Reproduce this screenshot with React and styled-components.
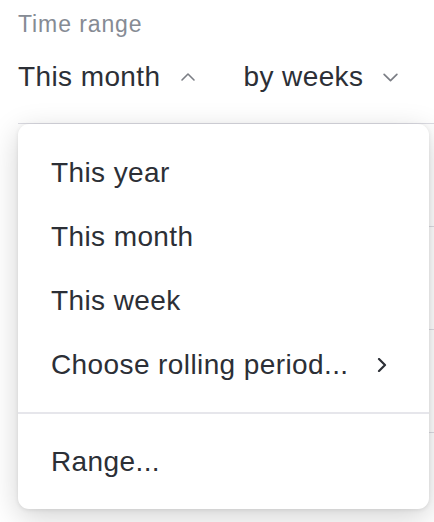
import React from 'react';
import styled, { createGlobalStyle } from 'styled-components';

const GlobalStyle = createGlobalStyle`
  html, body {
    margin: 0;
    padding: 0;
    background: #ffffff;
  }
  body {
    font-family: "Liberation Sans", Arial, sans-serif;
    color: #2c2f36;
    overflow: hidden;
  }
`;

const Page = styled.div`
  position: relative;
  height: 522px;
  padding: 11px 0 0 18px;
  box-sizing: border-box;
`;

const Label = styled.div`
  font-size: 23px;
  line-height: 26px;
  letter-spacing: 0.9px;
  color: #868b94;
`;

const Controls = styled.div`
  display: flex;
  align-items: center;
  gap: 48px;
  margin-top: 20px;
`;

const Picker = styled.div`
  display: flex;
  align-items: center;
  gap: 19px;
  font-size: 28px;
  line-height: 40px;
  letter-spacing: 0.4px;
  color: #2c2f36;
`;

const Table = styled.div`
  margin-top: 26px;
`;

const TableRow = styled.div`
  height: 102px;
  border-top: 1px solid #dcdce3;
`;

const Menu = styled.div`
  position: absolute;
  top: 124px;
  left: 18px;
  width: 411px;
  box-sizing: border-box;
  padding: 17px 0 15px;
  background: #ffffff;
  border-radius: 11px;
  box-shadow: 0 1px 4px rgba(0, 0, 0, 0.09), 0 8px 30px rgba(0, 0, 0, 0.18);
`;

const Item = styled.div`
  display: flex;
  align-items: center;
  justify-content: space-between;
  height: 64px;
  padding: 0 42px 0 33px;
  font-size: 28px;
  line-height: 64px;
  letter-spacing: 0.4px;
  color: #2c2f36;
`;

const Divider = styled.div`
  height: 2px;
  margin: 15px 0 16px;
  background: #e6e6eb;
`;

const Chevron = ({ dir, size = 14, color = '#7b7e85', weight = 1.6 }) => {
  const paths = {
    up: 'M2 9 L8 3 L14 9',
    down: 'M2 4 L8 10 L14 4',
    right: 'M2 1 L8 7 L2 13',
  };
  const box = dir === 'right' ? '0 0 10 14' : '0 0 16 13';
  const w = dir === 'right' ? 10 : size;
  const h = dir === 'right' ? 14 : Math.round(size * 0.8);
  return (
    <svg width={w} height={h} viewBox={box} fill="none">
      <path d={paths[dir]} stroke={color} strokeWidth={weight} strokeLinecap="round" strokeLinejoin="round" />
    </svg>
  );
};

const options = ['This year', 'This month', 'This week'];

export default function App() {
  return (
    <>
      <GlobalStyle />
      <Page>
        <Label>Time range</Label>
        <Controls>
          <Picker>
            This month
            <Chevron dir="up" size={16} />
          </Picker>
          <Picker>
            by weeks
            <Chevron dir="down" size={17} />
          </Picker>
        </Controls>
        <Table>
          <TableRow />
          <TableRow />
          <TableRow />
          <TableRow />
        </Table>
        <Menu>
          {options.map((o) => (
            <Item key={o}>{o}</Item>
          ))}
          <Item>
            Choose rolling period...
            <Chevron dir="right" color="#2c2f36" weight={2.2} />
          </Item>
          <Divider />
          <Item>Range...</Item>
        </Menu>
      </Page>
    </>
  );
}
